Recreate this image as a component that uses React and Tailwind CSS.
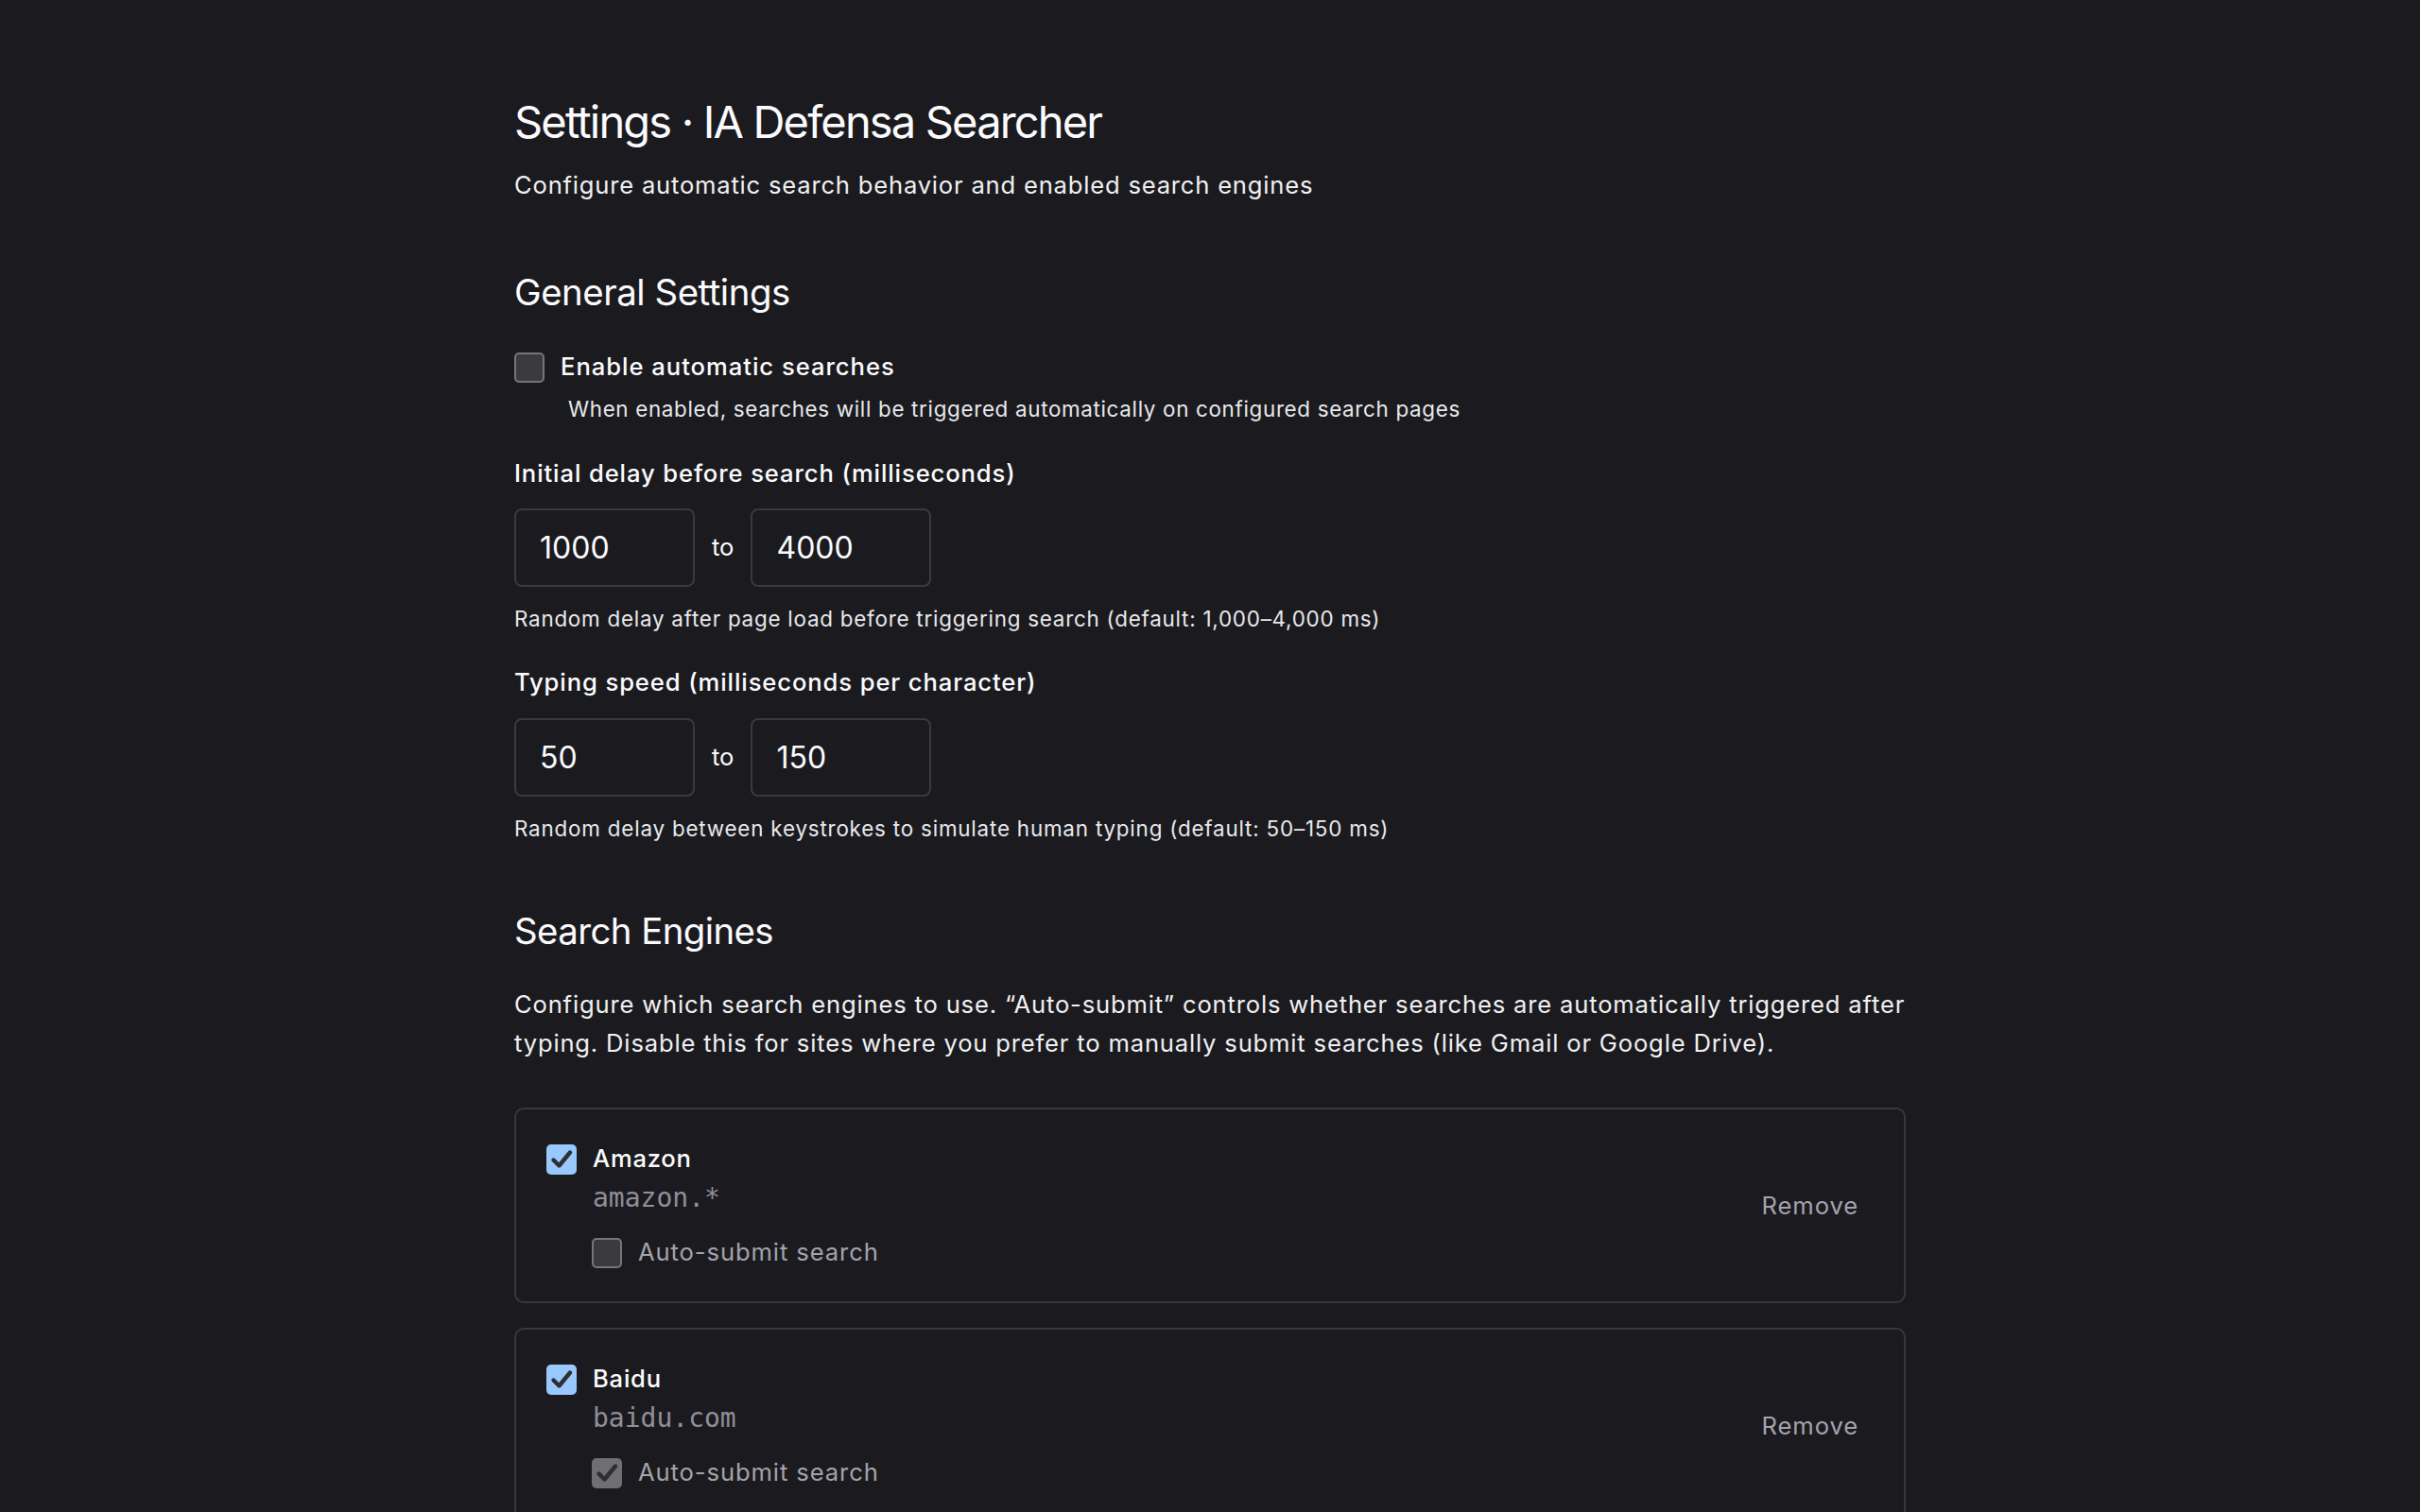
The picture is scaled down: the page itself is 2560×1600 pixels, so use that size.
import React from "react";

function CheckBox({ checked = false, tone = "blue" }) {
  if (!checked) {
    return (
      <span className="box-border inline-block h-[32px] w-[32px] shrink-0 rounded-[5px] border-[2px] border-[#767679] bg-[#3b3b3d]" />
    );
  }
  const bg = tone === "blue" ? "bg-[#99c8ff]" : "bg-[#6f6f72]";
  return (
    <span className={`inline-flex h-[32px] w-[32px] shrink-0 items-center justify-center rounded-[5px] ${bg}`}>
      <svg width="32" height="32" viewBox="0 0 32 32" fill="none">
        <path d="M7.5 16.5 L13.5 22.5 L25 8.5" stroke="#2f2f33" strokeWidth="4.4" strokeLinecap="round" strokeLinejoin="round" />
      </svg>
    </span>
  );
}

function NumInput({ value }) {
  return (
    <div className="box-border flex h-[83px] w-[191px] items-center rounded-[8px] border-[2px] border-[#3a3a3e] bg-[#1b1b1f] pl-[25px] text-[32px] text-[#fbfbfe]">
      {value}
    </div>
  );
}

function RangeRow({ a, b }) {
  return (
    <div className="flex items-center gap-[18px]">
      <NumInput value={a} />
      <span className="text-[25.6px] text-[#fbfbfe]">to</span>
      <NumInput value={b} />
    </div>
  );
}

function EngineCard({ name, pattern, auto }) {
  return (
    <div className="box-border flex items-center justify-between rounded-[10px] border-[2px] border-[#38383c] pb-[31px] pl-[32px] pr-[30px] pt-[32px]">
      <div className="flex flex-col">
        <div className="flex h-[41px] items-center gap-[17px]">
          <CheckBox checked tone="blue" />
          <span className="text-[25.6px] font-medium tracking-[0.03em] text-[#fbfbfe]">{name}</span>
        </div>
        <div className="ml-[49px] font-['DejaVu_Sans_Mono',monospace] text-[28px] leading-[42px] text-[#8f8f99]">
          {pattern}
        </div>
        <div className="ml-[48px] mt-[16px] flex h-[41px] items-center gap-[17px]">
          <CheckBox checked={auto} tone="gray" />
          <span className="text-[25.6px] tracking-[0.035em] text-[#a3a3ac]">Auto-submit search</span>
        </div>
      </div>
      <button className="mr-[18px] bg-transparent text-[25.6px] tracking-[0.035em] text-[#a3a3ac]">Remove</button>
    </div>
  );
}

export default function App() {
  return (
    <div className="min-h-screen bg-[#1b1b1f] font-[Inter,'Noto_Sans',sans-serif] text-[#fbfbfe]">
      <div className="mx-auto w-[1472px] pb-[60px] pt-[100px]">
        <h1 className="text-[47px] font-normal leading-[58px] tracking-[-0.039em]">
          Settings · IA Defensa Searcher
        </h1>
        <p className="mt-[17px] text-[25.6px] leading-[41px] tracking-[0.031em] text-[#f0f0f3]">
          Configure automatic search behavior and enabled search engines
        </p>

        <h2 className="mt-[70px] text-[38.4px] font-normal leading-[46px] tracking-[-0.012em]">General Settings</h2>

        <label className="mt-[36px] flex h-[41px] items-center gap-[17px]">
          <CheckBox checked={false} />
          <span className="text-[25.6px] font-medium tracking-[0.038em]">Enable automatic searches</span>
        </label>
        <p className="ml-[57px] mt-[7px] text-[22.4px] leading-[34px] tracking-[0.03em] text-[#e8e8ec]">
          When enabled, searches will be triggered automatically on configured search pages
        </p>

        <div className="mt-[33px] text-[25.6px] font-medium leading-[36px] tracking-[0.035em]">
          Initial delay before search (milliseconds)
        </div>
        <div className="mt-[19px]">
          <RangeRow a="1000" b="4000" />
        </div>
        <p className="mt-[17px] text-[22.4px] leading-[34px] tracking-[0.034em] text-[#e8e8ec]">
          Random delay after page load before triggering search (default: 1,000–4,000 ms)
        </p>

        <div className="mt-[32px] text-[25.6px] font-medium leading-[36px] tracking-[0.035em]">
          Typing speed (milliseconds per character)
        </div>
        <div className="mt-[20px]">
          <RangeRow a="50" b="150" />
        </div>
        <p className="mt-[17px] text-[22.4px] leading-[34px] tracking-[0.036em] text-[#e8e8ec]">
          Random delay between keystrokes to simulate human typing (default: 50–150 ms)
        </p>

        <h2 className="mt-[68px] text-[38.4px] font-normal leading-[46px] tracking-[-0.015em]">Search Engines</h2>
        <p className="mt-[34px] text-[25.6px] leading-[41px] tracking-[0.032em] text-[#f0f0f3]">
          Configure which search engines to use. “Auto-submit” controls whether searches are automatically triggered after
          typing. Disable this for sites where you prefer to manually submit searches (like Gmail or Google Drive).
        </p>

        <div className="mt-[48px] flex flex-col gap-[26px]">
          <EngineCard name="Amazon" pattern="amazon.*" auto={false} />
          <EngineCard name="Baidu" pattern="baidu.com" auto={true} />
          <EngineCard name="Bing" pattern="bing.com" auto={true} />
        </div>
      </div>
    </div>
  );
}
